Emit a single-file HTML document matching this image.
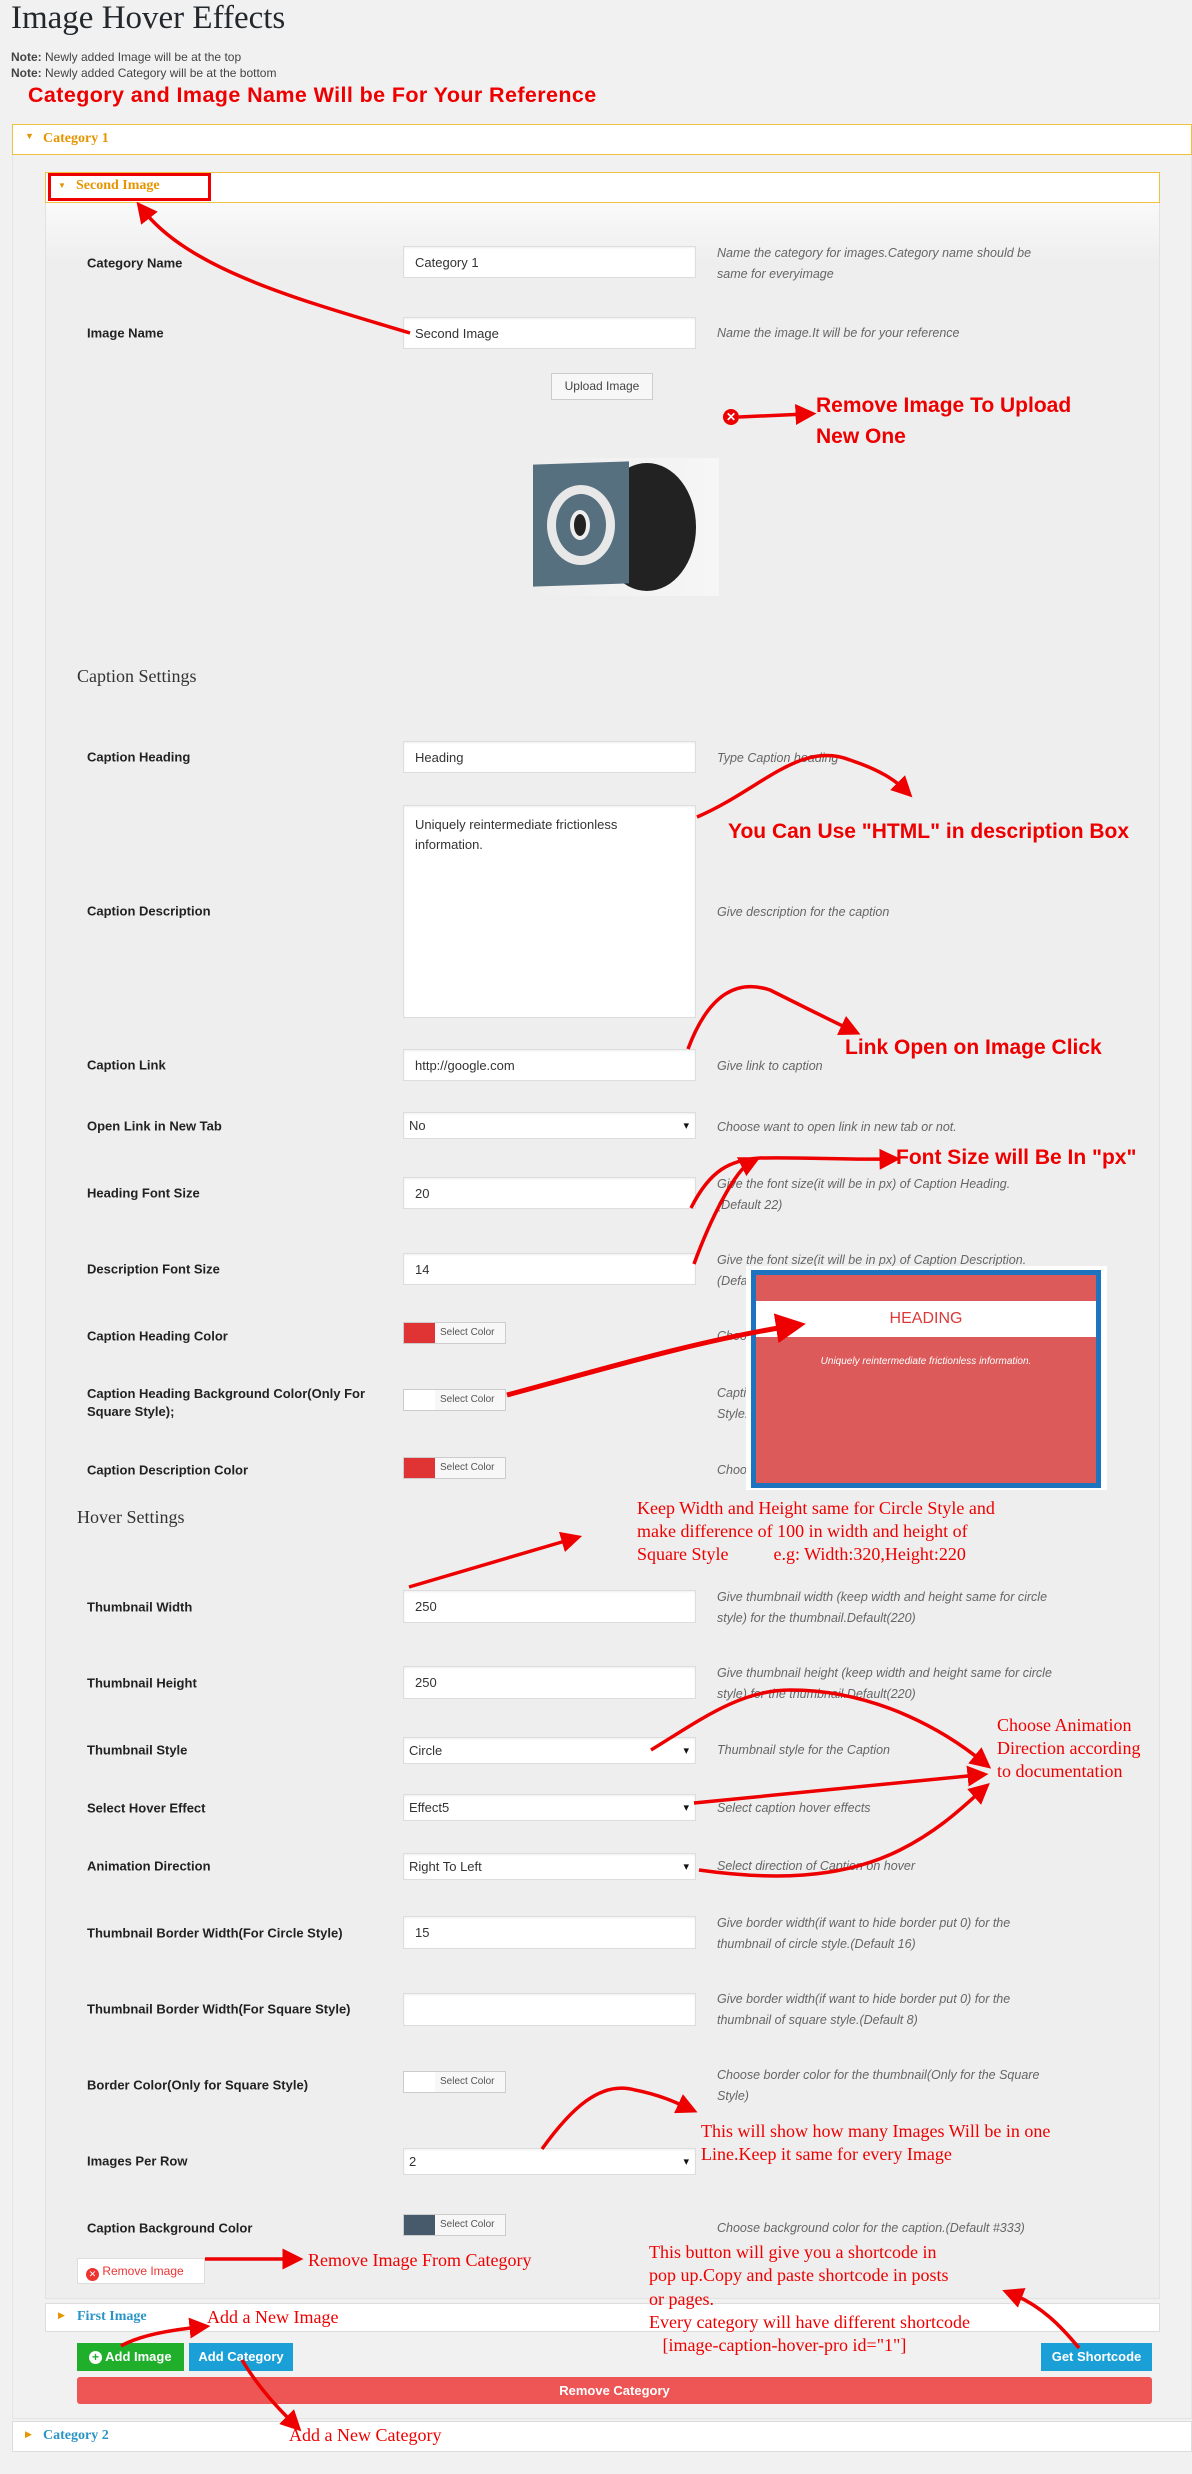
<!DOCTYPE html>
<html><head><meta charset="utf-8"><style>
*{box-sizing:border-box;margin:0;padding:0}
body{width:1192px;height:2474px;background:#f1f1f1;font-family:"Liberation Sans",sans-serif;position:relative;overflow:hidden;color:#222}
.a{position:absolute;white-space:nowrap}
.lbl{position:absolute;left:87px;font-size:13px;font-weight:bold;color:#222;transform:translateY(-50%)}
.inp{position:absolute;left:403px;width:293px;background:#fff;border:1px solid #ddd;box-shadow:inset 0 1px 2px rgba(0,0,0,.07);font-size:13px;color:#333;padding-left:11px;display:flex;align-items:center}
.sel{padding-left:5px}
.sel:after{content:"▾";position:absolute;right:6px;font-size:11px;color:#111}
.dsc{position:absolute;left:717px;font-size:12.5px;font-style:italic;color:#666;line-height:21px}
.sw{position:absolute;left:403px;width:103px;height:22px;border:1px solid #ccc;background:#f7f7f7;font-size:10px;color:#555}
.sw i{position:absolute;left:0;top:0;width:31px;height:20px}
.sw span{position:absolute;left:36px;top:4px}
.ann{position:absolute;color:#e00;font-weight:bold;font-size:20px;white-space:nowrap;font-family:"Liberation Sans Narrow","Liberation Sans",sans-serif}
.ser{position:absolute;color:#e00;font-family:"Liberation Serif",serif;font-size:18px;line-height:23px;white-space:nowrap}
</style></head><body>
<div class="a" style="left:11px;top:0px;font-family:'Liberation Serif',serif;font-size:33px;color:#23282d">Image Hover Effects</div>
<div class="a" style="left:11px;top:50px;font-size:12px;color:#444"><b>Note:</b> Newly added Image will be at the top</div>
<div class="a" style="left:11px;top:66px;font-size:12px;color:#444"><b>Note:</b> Newly added Category will be at the bottom</div>
<div class="ann" style="left:28px;top:83px;font-size:21.5px;letter-spacing:0.4px">Category and Image Name Will be For Your Reference</div>

<div class="a" style="left:12px;top:124px;width:1180px;height:2295px;border:1px solid #e5e5e5;background:#f1f1f1"></div>
<div class="a" style="left:12px;top:124px;width:1180px;height:31px;border:1px solid #f0c040;background:#fff"></div>
<div class="a" style="left:25px;top:131px;font-size:9px;color:#e69500">▼</div>
<div class="a" style="left:43px;top:131px;font-family:'Liberation Serif',serif;font-weight:bold;font-size:14px;color:#e69500">Category 1</div>

<div class="a" style="left:45px;top:172px;width:1115px;height:2127px;border:1px solid #e2e2e2;background:linear-gradient(#fff 0,#eee 90px,#eee 100%)"></div>
<div class="a" style="left:45px;top:172px;width:1115px;height:31px;border:1px solid #f0c040;background:#fff"></div>
<div class="a" style="left:48px;top:173px;width:163px;height:28px;border:3px solid #e00"></div>
<div class="a" style="left:58px;top:181px;font-size:8px;color:#e69500">▼</div>
<div class="a" style="left:76px;top:178px;font-family:'Liberation Serif',serif;font-weight:bold;font-size:14px;color:#e69500">Second Image</div>

<div class="lbl" style="top:263px">Category Name</div>
<div class="inp" style="top:246px;height:32px">Category 1</div>
<div class="dsc" style="top:243px">Name the category for images.Category name should be<br>same for everyimage</div>
<div class="lbl" style="top:333px">Image Name</div>
<div class="inp" style="top:317px;height:32px">Second Image</div>
<div class="dsc" style="top:323px">Name the image.It will be for your reference</div>
<div class="a" style="left:551px;top:373px;width:102px;height:27px;border:1px solid #ccc;background:#f7f7f7;font-size:12px;color:#444;text-align:center;line-height:25px">Upload Image</div>
<div class="a" style="left:723px;top:409px;width:16px;height:16px;border-radius:50%;background:#e00;color:#fff;font-size:12px;font-weight:bold;text-align:center;line-height:16px">✕</div>
<div class="ann" style="left:816px;top:394px;font-size:21px">Remove Image To Upload</div>
<div class="ann" style="left:816px;top:425px;font-size:21px">New One</div>
<div class="a" style="left:527px;top:458px;width:192px;height:138px;background:linear-gradient(90deg,#eee,#f6f6f6)"></div>
<div class="a" style="left:598px;top:463px;width:98px;height:128px;border-radius:50%;background:#222"></div>
<div class="a" style="left:533px;top:463px;width:96px;height:122px;background:#56707f;transform:skewY(-2deg)"></div>
<div class="a" style="left:547px;top:485px;width:68px;height:80px;border-radius:50%;border:9px solid #e8e8e8;background:#56707f"></div>
<div class="a" style="left:570px;top:510px;width:20px;height:30px;border-radius:50%;border:4px solid #eee;background:#222"></div>

<div class="a" style="left:77px;top:666px;font-family:'Liberation Serif',serif;font-size:18px;color:#333">Caption Settings</div>

<div class="lbl" style="top:757px">Caption Heading</div>
<div class="inp" style="top:741px;height:32px">Heading</div>
<div class="dsc" style="top:748px">Type Caption heading</div>
<div class="lbl" style="top:911px">Caption Description</div>
<div class="inp" style="top:805px;height:213px;align-items:flex-start;padding-top:9px;line-height:20px;font-size:13px">Uniquely reintermediate frictionless<br>information.</div>
<div class="dsc" style="top:902px">Give description for the caption</div>
<div class="ann" style="left:728px;top:820px;font-size:21px">You Can Use "HTML" in description Box</div>
<div class="lbl" style="top:1065px">Caption Link</div>
<div class="inp" style="top:1049px;height:32px">http://google.com</div>
<div class="dsc" style="top:1056px">Give link to caption</div>
<div class="ann" style="left:845px;top:1036px;font-size:21px">Link Open on Image Click</div>
<div class="lbl" style="top:1126px">Open Link in New Tab</div>
<div class="inp sel" style="top:1112px;height:27px">No</div>
<div class="dsc" style="top:1117px">Choose want to open link in new tab or not.</div>
<div class="ann" style="left:896px;top:1146px;font-size:21px">Font Size will Be In "px"</div>
<div class="lbl" style="top:1193px">Heading Font Size</div>
<div class="inp" style="top:1177px;height:32px">20</div>
<div class="dsc" style="top:1174px">Give the font size(it will be in px) of Caption Heading.<br>(Default 22)</div>
<div class="lbl" style="top:1269px">Description Font Size</div>
<div class="inp" style="top:1253px;height:32px">14</div>
<div class="dsc" style="top:1250px">Give the font size(it will be in px) of Caption Description.<br>(Default 14)</div>
<div class="lbl" style="top:1336px">Caption Heading Color</div>
<div class="sw" style="top:1322px"><i style="background:#e03434"></i><span>Select Color</span></div>
<div class="dsc" style="top:1326px">Choose</div>
<div class="lbl" style="top:1403px;line-height:18px">Caption Heading Background Color(Only For<br>Square Style);</div>
<div class="sw" style="top:1389px"><i style="background:#fff"></i><span>Select Color</span></div>
<div class="dsc" style="top:1383px">Caption<br>Style.</div>
<div class="lbl" style="top:1470px">Caption Description Color</div>
<div class="sw" style="top:1457px"><i style="background:#e03434"></i><span>Select Color</span></div>
<div class="dsc" style="top:1460px">Choose</div>

<div class="a" style="left:746px;top:1266px;width:361px;height:224px;background:#fff"></div>
<div class="a" style="left:751px;top:1270px;width:350px;height:218px;border:5px solid #1e73be;background:#dc5a5a"></div>
<div class="a" style="left:756px;top:1301px;width:340px;height:36px;background:#fff;color:#dc3a3a;font-size:16px;text-align:center;line-height:36px">HEADING</div>
<div class="a" style="left:756px;top:1356px;width:340px;text-align:center;color:#fff;font-size:10px;font-style:italic">Uniquely reintermediate frictionless information.</div>

<div class="a" style="left:77px;top:1507px;font-family:'Liberation Serif',serif;font-size:18px;color:#333">Hover Settings</div>
<div class="ser" style="left:637px;top:1497px">Keep Width and Height same for Circle Style and<br>make difference of 100 in width and height of<br>Square Style&nbsp;&nbsp;&nbsp;&nbsp;&nbsp;&nbsp;&nbsp;&nbsp;&nbsp;&nbsp;e.g: Width:320,Height:220</div>
<div class="lbl" style="top:1607px">Thumbnail Width</div>
<div class="inp" style="top:1590px;height:33px">250</div>
<div class="dsc" style="top:1587px">Give thumbnail width (keep width and height same for circle<br>style) for the thumbnail.Default(220)</div>
<div class="lbl" style="top:1683px">Thumbnail Height</div>
<div class="inp" style="top:1666px;height:33px">250</div>
<div class="dsc" style="top:1663px">Give thumbnail height (keep width and height same for circle<br>style) for the thumbnail.Default(220)</div>
<div class="lbl" style="top:1750px">Thumbnail Style</div>
<div class="inp sel" style="top:1737px;height:27px">Circle</div>
<div class="dsc" style="top:1740px">Thumbnail style for the Caption</div>
<div class="ser" style="left:997px;top:1714px">Choose Animation<br>Direction according<br>to documentation</div>
<div class="lbl" style="top:1808px">Select Hover Effect</div>
<div class="inp sel" style="top:1794px;height:27px">Effect5</div>
<div class="dsc" style="top:1798px">Select caption hover effects</div>
<div class="lbl" style="top:1866px">Animation Direction</div>
<div class="inp sel" style="top:1853px;height:27px">Right To Left</div>
<div class="dsc" style="top:1856px">Select direction of Caption on hover</div>
<div class="lbl" style="top:1933px">Thumbnail Border Width(For Circle Style)</div>
<div class="inp" style="top:1916px;height:33px">15</div>
<div class="dsc" style="top:1913px">Give border width(if want to hide border put 0) for the<br>thumbnail of circle style.(Default 16)</div>
<div class="lbl" style="top:2009px">Thumbnail Border Width(For Square Style)</div>
<div class="inp" style="top:1993px;height:33px"></div>
<div class="dsc" style="top:1989px">Give border width(if want to hide border put 0) for the<br>thumbnail of square style.(Default 8)</div>
<div class="lbl" style="top:2085px">Border Color(Only for Square Style)</div>
<div class="sw" style="top:2071px"><i style="background:#fff"></i><span>Select Color</span></div>
<div class="dsc" style="top:2065px">Choose border color for the thumbnail(Only for the Square<br>Style)</div>
<div class="ser" style="left:701px;top:2120px">This will show how many Images Will be in one<br>Line.Keep it same for every Image</div>
<div class="lbl" style="top:2161px">Images Per Row</div>
<div class="inp sel" style="top:2148px;height:27px">2</div>
<div class="lbl" style="top:2228px">Caption Background Color</div>
<div class="sw" style="top:2214px"><i style="background:#465a6b"></i><span>Select Color</span></div>
<div class="dsc" style="top:2218px">Choose background color for the caption.(Default #333)</div>
<div class="a" style="left:77px;top:2258px;width:128px;height:26px;border:1px solid #ddd;background:#fff;font-size:12px;color:#e33;line-height:24px;padding-left:8px"><span style="display:inline-block;width:13px;height:13px;border-radius:50%;background:#e33;color:#fff;font-size:9px;text-align:center;line-height:13px;vertical-align:-2px">✕</span> Remove Image</div>
<div class="ser" style="left:308px;top:2249px">Remove Image From Category</div>

<div class="a" style="left:45px;top:2303px;width:1115px;height:29px;border:1px solid #ddd;background:#fff"></div>
<div class="a" style="left:58px;top:2310px;font-size:9px;color:#e69500">▶</div>
<div class="a" style="left:77px;top:2309px;font-family:'Liberation Serif',serif;font-weight:bold;font-size:14px;color:#2a95c5">First Image</div>
<div class="ser" style="left:207px;top:2306px">Add a New Image</div>
<div class="ser" style="left:649px;top:2241px;line-height:23.3px">This button will give you a shortcode in<br>pop up.Copy and paste shortcode in posts<br>or pages.<br>Every category will have different shortcode<br>&nbsp;&nbsp;&nbsp;[image-caption-hover-pro id="1"]</div>

<div class="a" style="left:77px;top:2343px;width:107px;height:28px;background:#1faf2a;color:#fff;font-size:13px;font-weight:bold;line-height:28px;padding-left:12px"><span style="display:inline-block;width:13px;height:13px;border-radius:50%;background:#fff;color:#1faf2a;font-size:12px;text-align:center;line-height:13px">+</span> Add Image</div>
<div class="a" style="left:189px;top:2343px;width:104px;height:28px;background:#1a9fd6;color:#fff;font-size:13px;font-weight:bold;line-height:28px;text-align:center">Add Category</div>
<div class="a" style="left:1041px;top:2343px;width:111px;height:28px;background:#1a9fd6;color:#fff;font-size:13px;font-weight:bold;line-height:28px;text-align:center">Get Shortcode</div>
<div class="a" style="left:77px;top:2377px;width:1075px;height:27px;background:#ee5555;border-radius:3px;color:#fff;font-size:13px;font-weight:bold;line-height:27px;text-align:center">Remove Category</div>

<div class="a" style="left:12px;top:2421px;width:1180px;height:31px;border:1px solid #ddd;background:#fff"></div>
<div class="a" style="left:25px;top:2429px;font-size:9px;color:#e69500">▶</div>
<div class="a" style="left:43px;top:2428px;font-family:'Liberation Serif',serif;font-weight:bold;font-size:14px;color:#2a95c5">Category 2</div>
<div class="ser" style="left:289px;top:2424px">Add a New Category</div>

<svg class="a" style="left:0;top:0" width="1192" height="2474" viewBox="0 0 1192 2474">
<defs><marker id="ar" markerWidth="6" markerHeight="6" refX="3" refY="3" orient="auto"><path d="M0,0 L6,3 L0,6 z" fill="#e00"/></marker></defs>
<g fill="none" stroke="#e00" stroke-width="3.5" marker-end="url(#ar)">
<path d="M410 333 C300 300 190 270 143 210"/>
<path d="M739 417 L806 414"/>
<path d="M697 817 C760 790 800 740 850 760 C880 770 895 780 905 790"/>
<path d="M688 1049 C710 990 740 980 770 990 C800 1005 830 1020 851 1030"/>
<path d="M691 1208 C710 1170 730 1160 760 1158 C800 1157 850 1160 890 1159"/>
<path d="M694 1264 C710 1220 735 1170 751 1162" marker-end=""/>
<path d="M507 1395 C600 1370 700 1340 791 1326" stroke-width="5" marker-end=""/>
<path d="M409 1587 L572 1539"/>
<path d="M651 1750 C700 1720 740 1690 790 1690 C880 1690 950 1735 983 1762"/>
<path d="M694 1803 L978 1775"/>
<path d="M699 1870 C770 1880 840 1880 900 1850 C940 1830 965 1805 982 1790"/>
<path d="M542 2149 C570 2110 600 2080 635 2090 C660 2095 675 2102 688 2108"/>
<path d="M205 2259 L293 2259"/>
<path d="M121 2346 C140 2335 170 2330 200 2327"/>
<path d="M242 2360 C260 2390 280 2410 294 2424"/>
<path d="M1079 2348 C1060 2325 1040 2305 1012 2294"/>
</g>
</svg>
</body></html>
